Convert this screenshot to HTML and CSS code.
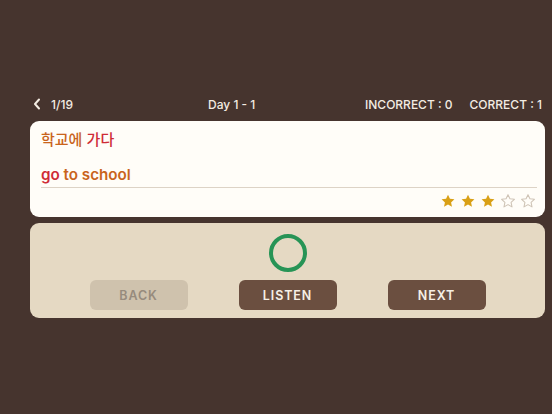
FILE: index.html
```html
<!DOCTYPE html>
<html lang="ko">
<head>
<meta charset="utf-8">
<link rel="stylesheet" href="styles.css">
</head>
<body>
<div class="page">
  <div class="header">
    <div class="hleft">
      <svg class="back-ico" width="8" height="12" viewBox="0 0 8 12"><path d="M6 1.5 L2 6 L6 10.5" fill="none" stroke="#f3ece2" stroke-width="2" stroke-linecap="round" stroke-linejoin="round"/></svg>
      <span class="count">1/19</span>
    </div>
    <div class="hmid">Day 1 - 1</div>
    <div class="hright">
      <span>INCORRECT : 0</span>
      <span>CORRECT : 1</span>
    </div>
  </div>

  <div class="card word-card">
    <div class="ko"><span class="orange">학교에</span> <span class="red">가다</span></div>
    <div class="en"><span class="red">go</span> <span class="orange">to school</span></div>
    <div class="stars">
      <svg class="star" viewBox="0 0 24 24"><path d="M12 2.5l2.9 6.2 6.7.8-5 4.6 1.4 6.7L12 17.4l-6 3.4 1.4-6.7-5-4.6 6.7-.8z" fill="#d9a016"/></svg>
      <svg class="star" viewBox="0 0 24 24"><path d="M12 2.5l2.9 6.2 6.7.8-5 4.6 1.4 6.7L12 17.4l-6 3.4 1.4-6.7-5-4.6 6.7-.8z" fill="#d9a016"/></svg>
      <svg class="star" viewBox="0 0 24 24"><path d="M12 2.5l2.9 6.2 6.7.8-5 4.6 1.4 6.7L12 17.4l-6 3.4 1.4-6.7-5-4.6 6.7-.8z" fill="#d9a016"/></svg>
      <svg class="star" viewBox="0 0 24 24"><path d="M12 2.5l2.9 6.2 6.7.8-5 4.6 1.4 6.7L12 17.4l-6 3.4 1.4-6.7-5-4.6 6.7-.8z" fill="none" stroke="#cfc4b6" stroke-width="1.6" stroke-linejoin="round"/></svg>
      <svg class="star" viewBox="0 0 24 24"><path d="M12 2.5l2.9 6.2 6.7.8-5 4.6 1.4 6.7L12 17.4l-6 3.4 1.4-6.7-5-4.6 6.7-.8z" fill="none" stroke="#cfc4b6" stroke-width="1.6" stroke-linejoin="round"/></svg>
    </div>
  </div>

  <div class="card control-card">
    <div class="result"></div>
    <div class="buttons">
      <div class="btn disabled">BACK</div>
      <div class="btn">LISTEN</div>
      <div class="btn">NEXT</div>
    </div>
  </div>
</div>
</body>
</html>
```

FILE: styles.css
```css
html, body {
  margin: 0;
  padding: 0;
  background: #46342e;
  width: 552px;
  height: 414px;
  overflow: hidden;
}
body {
  font-family: Inter, "Noto Sans", "Noto Sans CJK KR", sans-serif;
}
.page {
  padding: 94px 7px 0 30px;
  display: flex;
  flex-direction: column;
}
.header {
  height: 20px;
  display: flex;
  align-items: center;
  color: #f3ece2;
  font-size: 12px;
  font-weight: 500;
}
.hleft {
  width: 178px;
  display: flex;
  align-items: center;
}
.back-ico {
  margin-left: 3px;
  margin-right: 10px;
}
.hright {
  margin-left: auto;
  display: flex;
  gap: 17px;
  margin-right: 3px;
}
.card {
  border-radius: 9px;
}
.word-card {
  margin-top: 7px;
  background: #fffdf8;
  height: 96px;
  box-sizing: border-box;
  padding: 8px 8px 0 11px;
  display: flex;
  flex-direction: column;
}
.ko {
  font-family: "Noto Sans CJK KR", sans-serif;
  font-size: 15px;
  line-height: 20px;
  font-weight: 500;
}
.en {
  margin-top: 16px;
  font-size: 15.2px;
  line-height: 20px;
  font-weight: 600;
  padding-bottom: 2px;
  border-bottom: 1px solid #ddd3c6;
}
.orange { color: #c9641c; }
.red { color: #cf2c36; }
.stars {
  margin-top: 5px;
  display: flex;
  justify-content: flex-end;
  gap: 4px;
  padding-right: 1px;
}
.star {
  width: 16px;
  height: 16px;
}
.control-card {
  margin-top: 6px;
  background: #e5d9c3;
  height: 95px;
  box-sizing: border-box;
  padding: 11px 0 8px;
  display: flex;
  flex-direction: column;
  align-items: center;
}
.result {
  width: 30px;
  height: 30px;
  border: 4px solid #279456;
  border-radius: 50%;
}
.buttons {
  margin-top: 8px;
  display: flex;
  gap: 51px;
}
.btn {
  width: 98px;
  height: 30px;
  border-radius: 6px;
  background: #6b4f40;
  color: #f6efe6;
  font-size: 12.5px;
  font-weight: 600;
  letter-spacing: 0.9px;
  display: flex;
  align-items: center;
  justify-content: center;
}
.btn.disabled {
  background: #cfc2ad;
  color: #978b7d;
}
```
